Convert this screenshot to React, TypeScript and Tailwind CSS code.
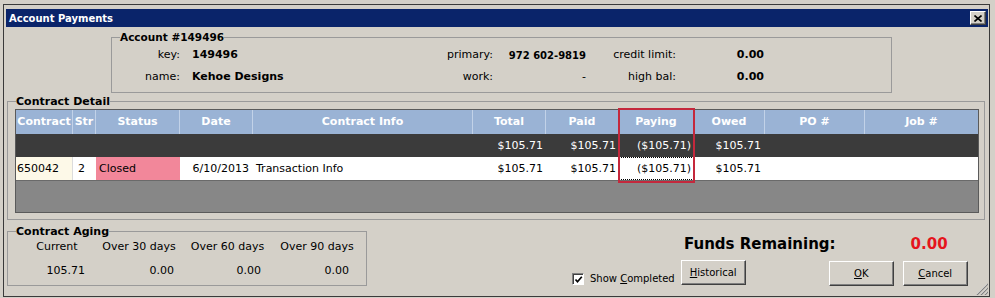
import type { ReactNode } from "react";

const cols =
  "grid grid-cols-[57px_23px_84px_73px_220px_73px_73px_75px_71px_100px_1fr]";

const headers = ["Contract", "Str", "Status", "Date", "Contract Info", "Total", "Paid", "Paying", "Owed", "PO #", "Job #"];

function WinButton({ children, className = "" }: { children: ReactNode; className?: string }) {
  return (
    <button
      className={
        "h-[25px] w-[65px] border border-t-white border-l-white border-r-[#404040] border-b-[#404040] bg-[#d4d0c8] text-[10px] text-black shadow-[inset_-1px_-1px_0_#808080] " +
        className
      }
    >
      {children}
    </button>
  );
}

export default function App() {
  return (
    <div className="h-[298px] w-[995px] bg-[#d4d0c8] pb-[1px] pl-[3px] pr-[5px] pt-[4px] font-['DejaVu_Sans',sans-serif] text-[11px] text-black">
      <div className="relative flex h-full flex-col border border-[#3a3a3a] pl-[2px] pr-[1px] pt-[4px]">
        {/* title bar */}
        <div className="flex h-[18px] items-center justify-between bg-[#0a246a] pl-[3px] pr-[2px]">
          <span className="text-[10px] font-bold text-white">Account Payments</span>
          <button className="flex h-[14px] w-[16px] items-center justify-center border border-t-white border-l-white border-r-[#404040] border-b-[#404040] bg-[#d4d0c8] shadow-[inset_-1px_-1px_0_#808080]">
            <svg width="8" height="7" viewBox="0 0 8 7">
              <path d="M0.5 0.5 L7.5 6.5 M7.5 0.5 L0.5 6.5" stroke="#000" strokeWidth="1.6" />
            </svg>
          </button>
        </div>

        {/* account */}
        <fieldset className="ml-[105px] mt-[4px] w-[781px] border border-[#9a9a9a] pb-[4px]">
          <legend className="ml-[8px] text-[10.5px] font-bold leading-[13px]">Account #149496</legend>
          <div className="grid grid-cols-[68px_239px_74px_93px_90px_88px] grid-rows-[22px_22px] items-center">
            <span className="text-right">key:</span>
            <span className="pl-[12px] font-bold">149496</span>
            <span className="text-right">primary:</span>
            <span className="text-right text-[10px] font-bold">972 602-9819</span>
            <span className="text-right">credit limit:</span>
            <span className="text-right font-bold">0.00</span>
            <span className="text-right">name:</span>
            <span className="pl-[12px] font-bold">Kehoe Designs</span>
            <span className="text-right">work:</span>
            <span className="text-right">-</span>
            <span className="text-right">high bal:</span>
            <span className="text-right font-bold">0.00</span>
          </div>
        </fieldset>

        {/* contract detail */}
        <fieldset className="ml-[1px] mt-[2px] w-[978px] border border-[#9a9a9a] pb-[6px]">
          <legend className="ml-[8px] font-bold leading-[13px]">Contract Detail</legend>
          <div className="relative ml-[7px] mt-[1px] h-[104px] w-[964px] border border-[#5a5a5a] bg-[#878787]">
            <div className={cols + " h-[24px] bg-[#9ab3d5] font-bold leading-[24px] text-white"}>
              {headers.map((h, i) => (
                <span key={h} className={"text-center " + (i < headers.length - 1 ? "border-r border-[#c2d2e8]" : "")}>
                  {h}
                </span>
              ))}
            </div>
            <div className={cols + " h-[23px] bg-[#3b3b3b] leading-[23px] text-white"}>
              <span />
              <span />
              <span />
              <span />
              <span />
              <span className="pr-[3px] text-right">$105.71</span>
              <span className="pr-[3px] text-right">$105.71</span>
              <span className="pr-[3px] text-right">($105.71)</span>
              <span className="pr-[4px] text-right">$105.71</span>
              <span />
              <span />
            </div>
            <div className={cols + " h-[24px] border-b border-[#6a6a6a] bg-white leading-[23px]"}>
              <span className="border-r border-[#dcdcdc] bg-[#fdf9e8] pl-[1px]">650042</span>
              <span className="pl-[5px]">2</span>
              <span className="bg-[#f2879a] pl-[3px]">Closed</span>
              <span className="pr-[4px] text-right">6/10/2013</span>
              <span className="pl-[3px]">Transaction Info</span>
              <span className="pr-[3px] text-right">$105.71</span>
              <span className="pr-[3px] text-right">$105.71</span>
              <span className="border border-dotted border-black pr-[2px] text-right leading-[21px]">($105.71)</span>
              <span className="pr-[4px] text-right">$105.71</span>
              <span />
              <span />
            </div>
            <div className="absolute left-[602px] top-[-2px] h-[75px] w-[77px] border-2 border-[#c4283c]" />
          </div>
        </fieldset>

        {/* bottom */}
        <div className="flex">
          <fieldset className="ml-[1px] mt-[5px] w-[360px] border border-[#9a9a9a] pb-[5px]">
            <legend className="ml-[8px] font-bold leading-[13px]">Contract Aging</legend>
            <div className="flex">
              <div className="ml-[21px] w-[56px]">
                <div className="h-[18px] text-center leading-[18px]">Current</div>
                <div className="mt-[6px] h-[18px] text-right leading-[18px]">105.71</div>
              </div>
              <div className="ml-[16px] w-[76px]">
                <div className="h-[18px] text-center leading-[18px]">Over 30 days</div>
                <div className="mt-[6px] h-[18px] pr-[3px] text-right leading-[18px]">0.00</div>
              </div>
              <div className="ml-[12px] w-[77px]">
                <div className="h-[18px] text-center leading-[18px]">Over 60 days</div>
                <div className="mt-[6px] h-[18px] pr-[5px] text-right leading-[18px]">0.00</div>
              </div>
              <div className="ml-[13px] w-[76px]">
                <div className="h-[18px] text-center leading-[18px]">Over 90 days</div>
                <div className="mt-[6px] h-[18px] pr-[6px] text-right leading-[18px]">0.00</div>
              </div>
            </div>
          </fieldset>

          <div className="flex flex-1 flex-col pt-[15px]">
            <div className="ml-[317px] flex h-[18px] items-center gap-[75px] text-[15px] font-bold">
              <span>Funds Remaining:</span>
              <span className="text-[#e5141c]">0.00</span>
            </div>
            <div className="mt-[7px] flex items-end">
              <label className="ml-[205px] flex items-center text-[10px] leading-[12px]">
                <span className="flex h-[12px] w-[12px] items-center justify-center border border-t-[#808080] border-l-[#808080] border-r-white border-b-white bg-white shadow-[inset_1px_1px_0_#404040]">
                  <svg width="9" height="9" viewBox="0 0 9 9">
                    <path d="M1.5 4.5 L3.5 6.8 L7.8 1.8" stroke="#000" strokeWidth="1.7" fill="none" />
                  </svg>
                </span>
                <span className="ml-[6px]">
                  Show <span className="underline">C</span>ompleted
                </span>
              </label>
              <WinButton className="ml-[6px]">
                <span className="underline">H</span>istorical
              </WinButton>
              <WinButton className="ml-[83px] translate-y-[1px]">
                <span className="underline">O</span>K
              </WinButton>
              <WinButton className="ml-[9px] translate-y-[1px]">
                <span className="underline">C</span>ancel
              </WinButton>
            </div>
          </div>
        </div>

        {/* resize grip */}
        <svg className="absolute bottom-[1px] right-[1px]" width="12" height="12" viewBox="0 0 12 12">
          <path d="M11 1 L1 11 M11 5 L5 11 M11 9 L9 11" stroke="#fff" strokeWidth="1" />
          <path d="M12 1 L1 12 M12 5 L5 12 M12 9 L9 12" stroke="#808080" strokeWidth="1.2" />
        </svg>
      </div>
    </div>
  );
}
